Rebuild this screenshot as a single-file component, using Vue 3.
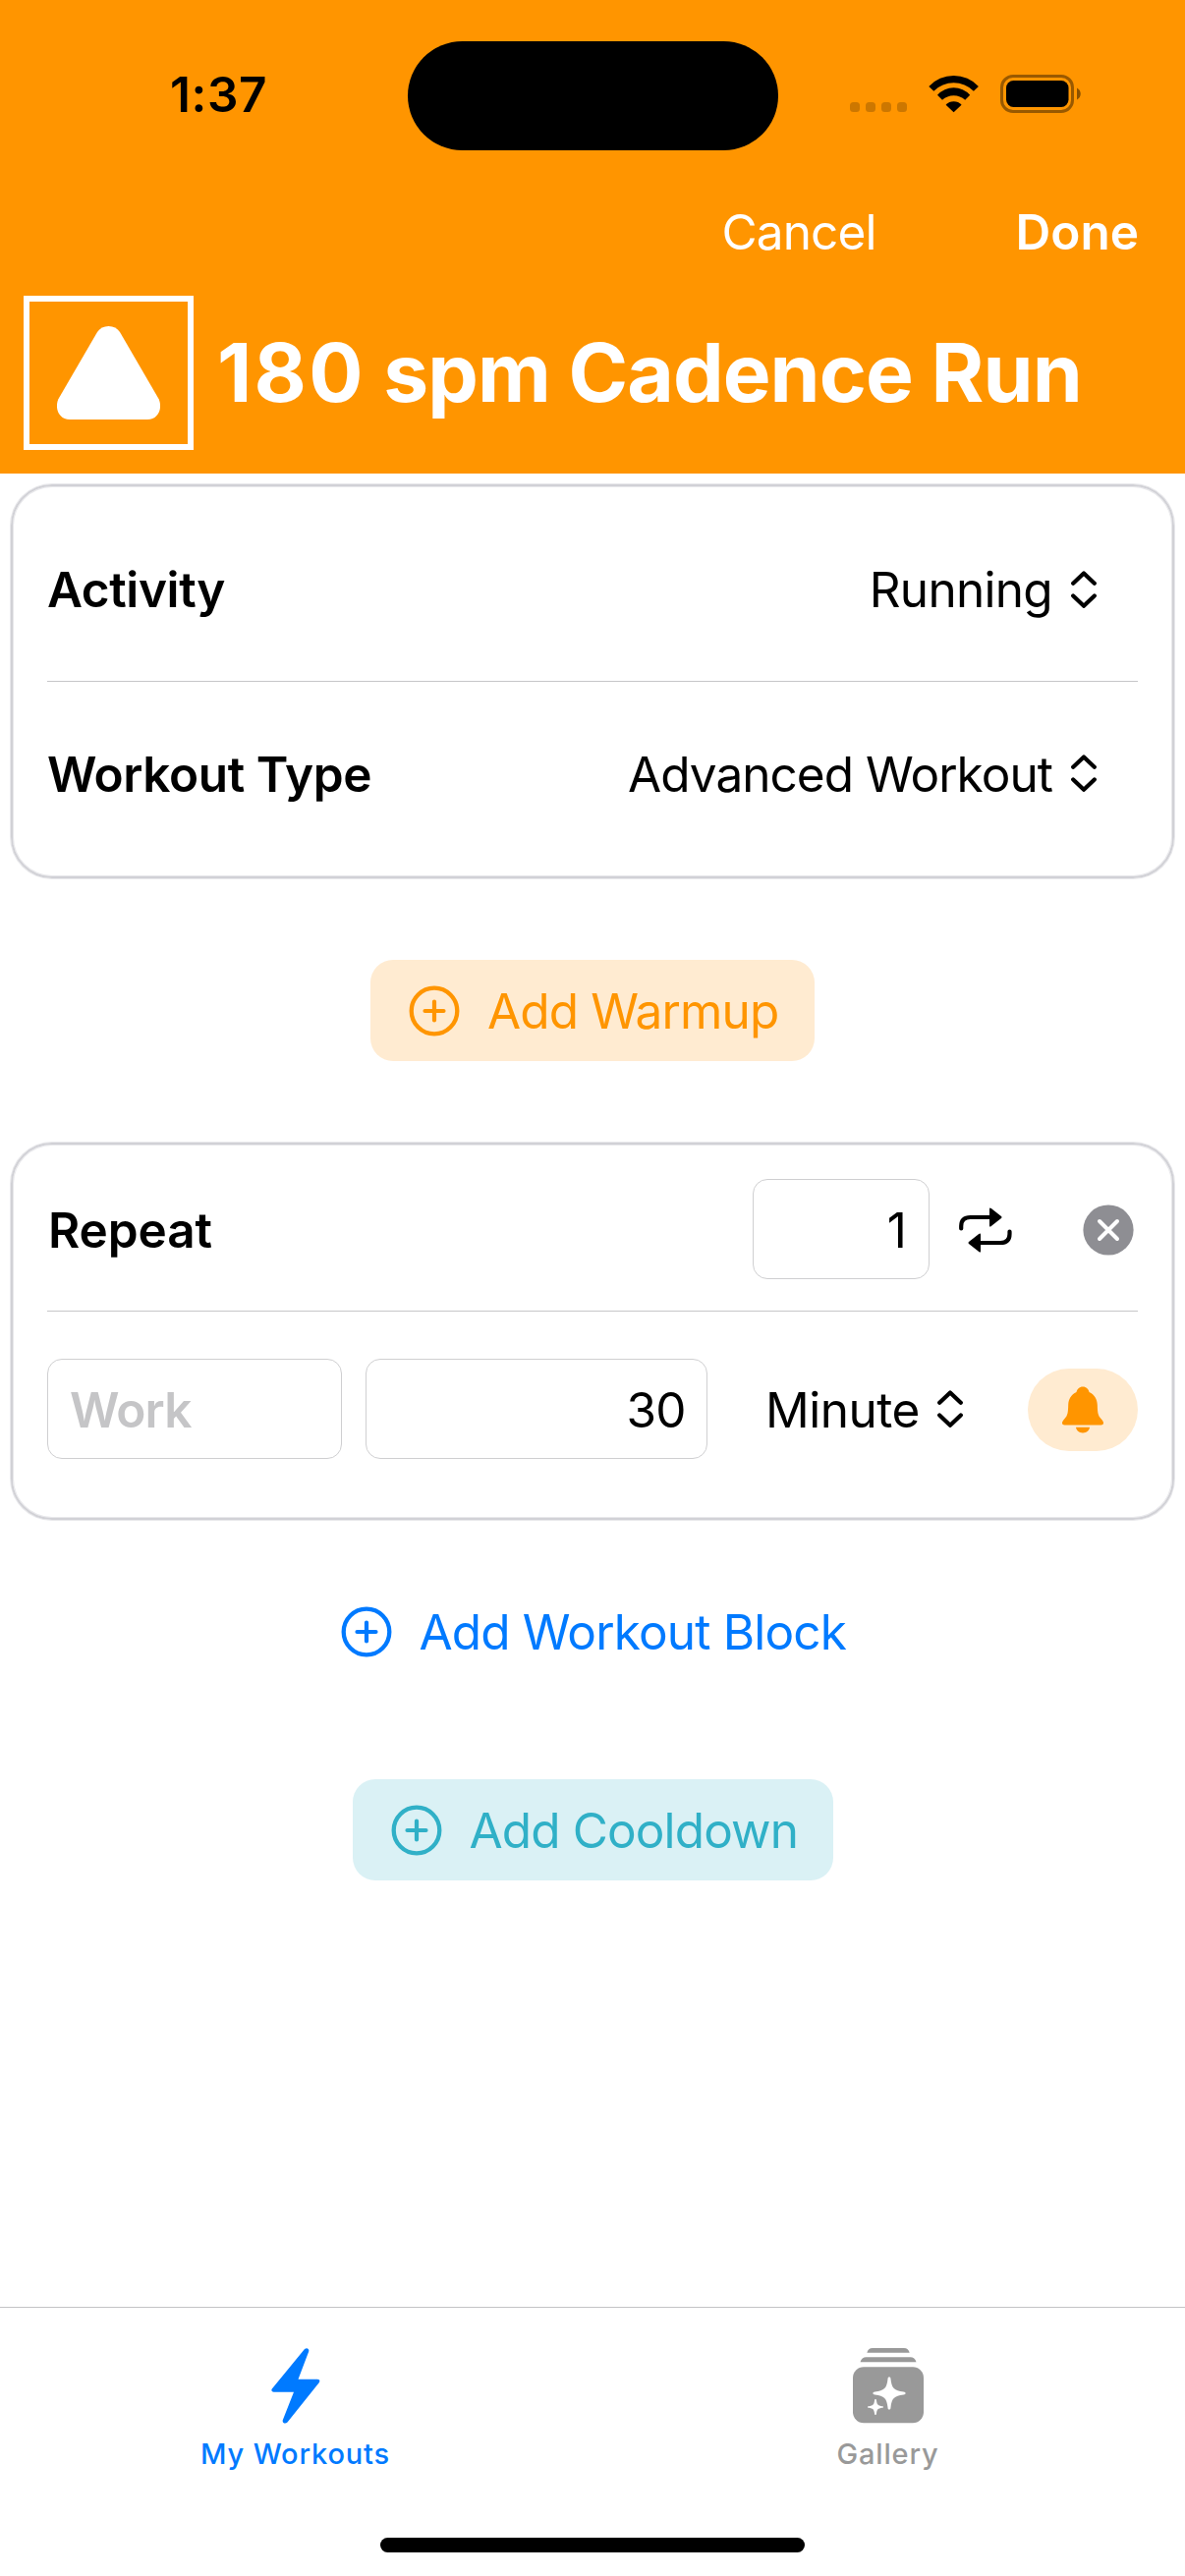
<script setup>
import { h } from 'vue'

const PlusCircle = () =>
  h('svg', { width: 52, height: 52, viewBox: '0 0 52 52', fill: 'none', stroke: 'currentColor' }, [
    h('circle', { cx: 26, cy: 26, r: 23.3, 'stroke-width': 4.3 }),
    h('path', { d: 'M26 16.5V35.5M16.5 26H35.5', 'stroke-width': 4.2, 'stroke-linecap': 'round' })
  ])

const UpDown = () =>
  h('svg', { width: 26, height: 38, viewBox: '0 0 26 38', fill: 'none', stroke: 'currentColor' }, [
    h('path', {
      d: 'M2.2 12.8L13 2.4L23.8 12.8M2.2 25.4L13 35.8L23.8 25.4',
      'stroke-width': 4.2,
      'stroke-linecap': 'round',
      'stroke-linejoin': 'round'
    })
  ])
</script>

<template>
  <div class="screen">
    <header class="header">
      <div class="status">
        <span class="time">1:37</span>
        <div class="island"></div>
        <div class="indicators">
          <div class="dots"><i></i><i></i><i></i><i></i></div>
          <svg class="wifi" width="52" height="38" viewBox="0 0 52 38">
            <path d="M.3 11A34.6 34.6 0 0 1 50.9 11L45.9 15.7A28.9 28.9 0 0 0 5.3 15.7Z" />
            <path d="M9 19.7A22.3 22.3 0 0 1 42.2 19.7L37.2 24.7A17 17 0 0 0 14 24.7Z" />
            <path d="M17.6 29.7A11 11 0 0 1 33.6 29.7L25.6 37.2Z" />
          </svg>
          <svg class="battery" width="83" height="40" viewBox="0 0 83 40">
            <rect x="1.5" y="1.5" width="72" height="36" rx="11.5" fill="none" stroke="#000" stroke-opacity=".4" stroke-width="3" />
            <rect x="6" y="6" width="63.5" height="27" rx="7.5" />
            <path d="M78 13.5C83 16 83 23 78 25.5Z" fill-opacity=".45" />
          </svg>
        </div>
      </div>
      <nav class="actions">
        <span class="cancel">Cancel</span>
        <span class="done">Done</span>
      </nav>
      <div class="heading">
        <div class="shape">
          <svg width="105" height="95" viewBox="0 0 105 95">
            <path d="M13 95C2 95-2.500 84 1.200 74.500L41 6Q45 0 52.500 0Q60 0 64 6L103.800 74.500C107.500 84 103 95 92 95Z" fill="#fff" />
          </svg>
        </div>
        <h1><span class="digits">180</span> spm Cadence Run</h1>
      </div>
    </header>

    <main class="content">
      <section class="card summary">
        <div class="row">
          <span class="label">Activity</span>
          <span class="value running">Running</span>
          <UpDown />
        </div>
        <div class="row type-row">
          <span class="label">Workout Type</span>
          <span class="value advanced">Advanced Workout</span>
          <UpDown />
        </div>
      </section>

      <button class="add warmup"><PlusCircle /><span>Add Warmup</span></button>

      <section class="card block">
        <div class="repeat">
          <span class="label rep">Repeat</span>
          <div class="field count">1</div>
          <svg class="loop" width="54" height="46" viewBox="0 0 54 46">
            <g fill="none" stroke="#000" stroke-width="4.2" stroke-linecap="round">
              <path d="M2.200 21.500V19Q2.200 10 11.500 10H34" />
              <path d="M51.500 24.500V27Q51.500 36 42.200 36H20" />
            </g>
            <path d="M31 1.600Q31 -.4 32.800 1L43 9Q44 10 43 11L32.800 19Q31 20.400 31 18.400Z" />
            <path d="M22 27.600Q22 25.600 20.200 27L10 35Q9 36 10 37L20.200 45Q22 46.400 22 44.400Z" />
          </svg>
          <svg class="remove" width="52" height="52" viewBox="0 0 52 52">
            <circle cx="26" cy="26" r="25.6" fill="#8e8e93" />
            <path d="M17 17L35 35M35 17L17 35" stroke="#fff" stroke-width="4" stroke-linecap="round" />
          </svg>
        </div>
        <div class="step">
          <div class="field name">Work</div>
          <div class="field amount">30</div>
          <span class="value minute">Minute</span>
          <UpDown />
          <div class="alert">
            <svg width="42" height="48" viewBox="0 0 42 48">
              <path d="M21 .5C24.500 .5 27 3 27.500 6C33 8.500 35.500 13 35.800 19C36 27 36.500 30 39.500 33C41.500 35.500 42 36.300 42 37.300C42 38.700 41 39.500 39.500 39.500H2.500C1 39.500 0 38.700 0 37.300C0 36.300 .5 35.500 2.500 33C5.500 30 6 27 6.200 19C6.500 13 9 8.500 14.500 6C15 3 17.500 .5 21 .5Z" />
              <path d="M14 41.800H28C27.500 45 25 47.500 21 47.500S14.500 45 14 41.800Z" />
            </svg>
          </div>
        </div>
      </section>

      <button class="add more"><PlusCircle /><span>Add Workout Block</span></button>
      <button class="add cooldown"><PlusCircle /><span>Add Cooldown</span></button>
    </main>

    <footer class="tabs">
      <div class="tab active">
        <svg width="50" height="77" viewBox="0 0 50 77">
          <path d="M34 1C36.500 -1 39 .8 38.200 3.500L27.500 31.700H47C49.300 31.700 50 33.500 48.700 35.300L16.500 75.500C14.300 77.900 10.700 76 11.900 73L23 44.800H2.600C.4 44.800-.3 42.800 1 41.200Z" />
        </svg>
        <span>My Workouts</span>
      </div>
      <div class="tab">
        <svg width="72" height="77" viewBox="0 0 72 77">
          <path d="M14.300 4.800Q15.500 0 20 0H52Q56.500 0 57.700 4.800Z" />
          <path d="M7.500 14.300Q9 9.300 13.500 9.300H58.500Q63 9.300 64.500 14.300Z" />
          <rect y="19.300" width="72" height="57" rx="11" />
          <g fill="#fff">
            <path d="M37 29.500C38 29.500 38.400 30 38.500 31.500C39.500 41 42 43 51.500 44.500C53 44.700 53.500 45 53.500 46S53 47.300 51.500 47.500C42 49 39.500 51 38.500 60.500C38.400 62 38 62.500 37 62.500S35.600 62 35.500 60.500C34.500 51 32 49 22.500 47.500C21 47.300 20.500 47 20.500 46S21 44.700 22.500 44.500C32 43 34.500 41 35.500 31.500C35.600 30 36 29.500 37 29.500Z" />
            <path d="M23 52C23.600 52 23.800 52.300 24 53.500C24.500 57.500 25.500 58.500 29.800 59.200C30.800 59.300 31 59.500 31 60S30.800 60.700 29.800 60.800C25.500 61.500 24.500 62.500 24 66.500C23.800 67.700 23.600 68 23 68S22.200 67.700 22 66.500C21.500 62.500 20.500 61.500 16.200 60.800C15.200 60.700 15 60.500 15 60S15.200 59.300 16.200 59.200C20.500 58.500 21.500 57.500 22 53.500C22.200 52.300 22.400 52 23 52Z" />
          </g>
        </svg>
        <span>Gallery</span>
      </div>
      <div class="home"></div>
    </footer>
  </div>
</template>

<style>
body {
  margin: 0;
  background: #fff;
}
</style>

<style scoped>
.screen {
  width: 1206px;
  height: 2622px;
  display: flex;
  flex-direction: column;
  background: #fff;
  color: #000;
  font-family: Inter, 'Liberation Sans', sans-serif;
  font-size: 49.5px;
  line-height: 60px;
  white-space: nowrap;
  overflow: hidden;
}
svg {
  display: block;
  flex: none;
}
.header {
  height: 482px;
  background: #ff9500;
}
.status {
  height: 192px;
  display: flex;
  align-items: flex-start;
}
.time {
  width: 242px;
  margin: 66px 0 0 173px;
  font-weight: 600;
  letter-spacing: 0.6px;
}
.island {
  width: 377px;
  height: 111px;
  margin-top: 41.500px;
  border-radius: 55.500px;
  background: #000;
}
.indicators {
  display: flex;
  margin: 76px 0 0 73px;
}
.dots {
  display: flex;
  gap: 6px;
  margin-top: 28px;
}
.dots i {
  width: 10px;
  height: 10px;
  border-radius: 3.500px;
  background: #cc7700;
}
.wifi {
  margin: 1px 0 0 22px;
}
.battery {
  margin-left: 21px;
}
.actions {
  height: 109px;
  display: flex;
  justify-content: flex-end;
  padding: 14px 47px 0 0;
  box-sizing: border-box;
  color: #fff;
}
.cancel {
  letter-spacing: -0.9px;
}
.done {
  margin-left: 142px;
  font-weight: 600;
}
.heading {
  display: flex;
  align-items: center;
  padding-left: 24px;
  color: #fff;
}
.shape {
  width: 173px;
  height: 157px;
  box-sizing: border-box;
  border: 6px solid #fff;
  display: flex;
  align-items: center;
  justify-content: center;
}
h1 {
  margin: 0 0 0 24px;
  font-size: 82px;
  line-height: 100px;
  font-weight: 700;
  letter-spacing: -0.9px;
}
.digits {
  letter-spacing: 2.200px;
}
.content {
  flex: 1;
  display: flex;
  flex-direction: column;
  align-items: center;
}
.card {
  width: 1184px;
  box-sizing: border-box;
  border: 2px solid #d1d1d6;
  border-radius: 42px;
  box-shadow: 0 0 0 1px #e8e8eb, inset 0 0 0 1px #e8e8eb;
  padding: 0 35px;
}
.label {
  margin-right: auto;
  font-weight: 600;
  letter-spacing: -0.4px;
}
.summary {
  height: 401px;
  margin-top: 11px;
  padding-top: 13px;
}
.row {
  height: 186px;
  box-sizing: border-box;
  display: flex;
  align-items: center;
  padding: 0 42px 2px 0;
  border-bottom: 1px solid #c6c6c8;
}
.row.type-row {
  height: 188px;
  padding-bottom: 0;
  border: 0;
}
.row svg {
  margin: -2px 0 0 19px;
}
.row:first-child svg {
  margin-top: 0;
}
.running {
  letter-spacing: -0.7px;
}
.advanced {
  letter-spacing: -0.95px;
}
.add {
  display: flex;
  align-items: center;
  height: 103px;
  box-sizing: border-box;
  border: 0;
  border-radius: 23px;
  padding: 0 0 0 39px;
  font: inherit;
  background: none;
}
.add span {
  margin-left: 28px;
  letter-spacing: -0.87px;
}
.warmup {
  width: 452px;
  margin-top: 83px;
  background: #ffebd1;
  color: #ff9500;
}
.more {
  width: 533px;
  margin-top: 62px;
  padding-left: 10px;
  color: #007aff;
}
.more span {
  letter-spacing: -0.83px;
}
.cooldown {
  width: 489px;
  margin-top: 99px;
  background: #daf1f5;
  color: #30b0c7;
}
.block {
  height: 384px;
  margin-top: 83px;
}
.repeat {
  height: 170px;
  display: flex;
  align-items: center;
  padding: 3px 4px 0 1px;
  box-sizing: border-box;
  border-bottom: 1px solid #c6c6c8;
}
.rep {
  padding-top: 2px;
  letter-spacing: -0.1px;
}
.field {
  height: 102px;
  box-sizing: border-box;
  border: 1px solid #cfcfd1;
  border-radius: 15px;
  padding: 0 22px;
  line-height: 102px;
}
.count {
  width: 180px;
  text-align: right;
}
.loop {
  margin: 1px 0 0 30px;
}
.remove {
  margin: 1px 0 0 72px;
}
.step {
  display: flex;
  align-items: center;
  padding-top: 48px;
}
.name {
  width: 300px;
  color: #c5c5c7;
  font-weight: 600;
  letter-spacing: -0.8px;
}
.amount {
  width: 348px;
  margin-left: 24px;
  padding-right: 21px;
  text-align: right;
  letter-spacing: -0.6px;
}
.minute {
  margin-left: 59px;
  padding-top: 2px;
  letter-spacing: -0.5px;
}
.step > svg {
  margin-left: 18px;
}
.alert {
  width: 112px;
  height: 84px;
  margin: 1px 0 0 auto;
  border-radius: 42px;
  background: #ffebd1;
  display: flex;
  align-items: center;
  justify-content: center;
  fill: #ff9500;
}
.tabs {
  height: 274px;
  box-sizing: border-box;
  border-top: 1px solid #c4c4c6;
  display: flex;
  flex-wrap: wrap;
  justify-content: center;
  align-content: flex-start;
  font-size: 29px;
  line-height: 36px;
  font-weight: 500;
}
.tab {
  width: 603px;
  height: 194px;
  padding: 41px 2px 0 0;
  box-sizing: border-box;
  display: flex;
  flex-direction: column;
  align-items: center;
  color: #999;
  fill: currentColor;
}
.tab span {
  margin-top: 13px;
  letter-spacing: 0.85px;
}
.tab.active {
  color: #007aff;
}
.home {
  width: 432px;
  height: 15px;
  margin-top: 40px;
  border-radius: 8px;
  background: #000;
}
</style>
